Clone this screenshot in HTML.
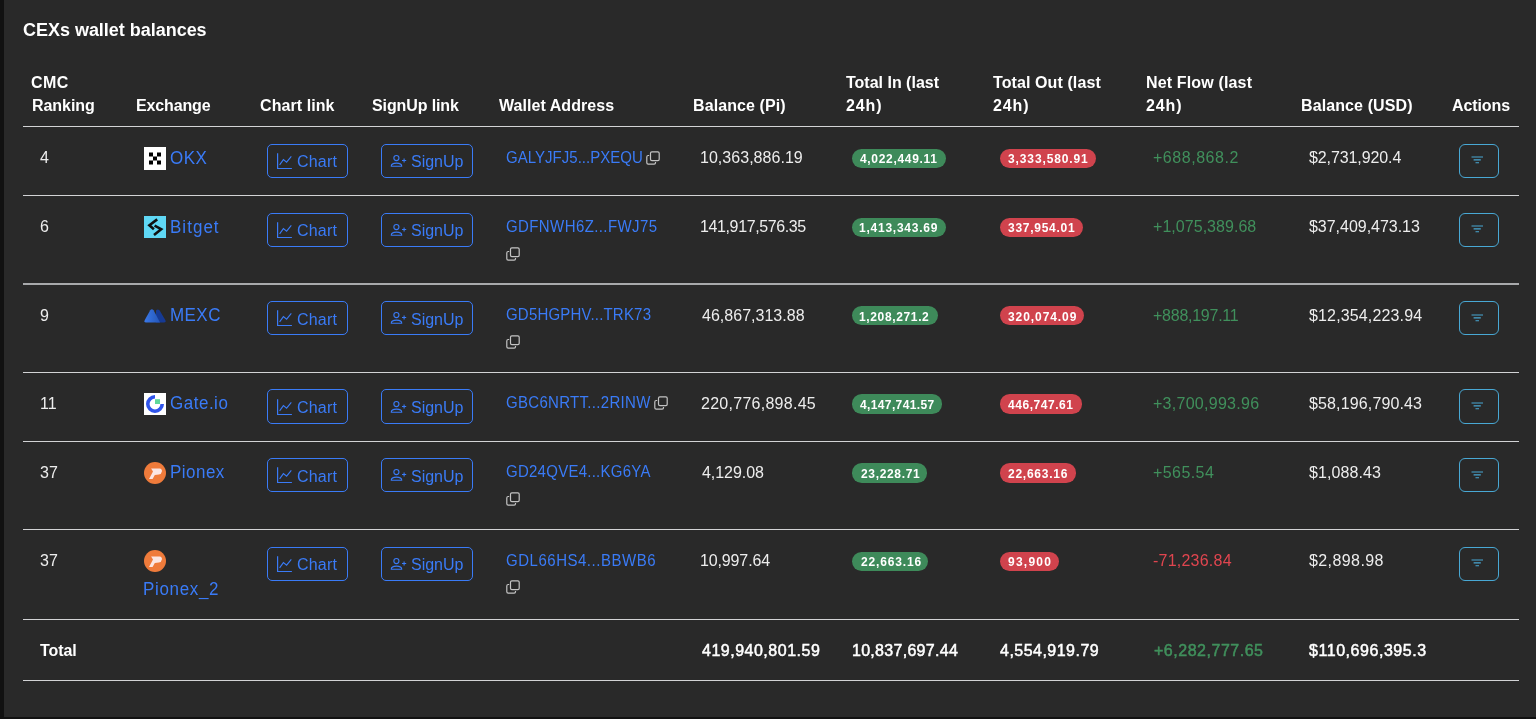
<!DOCTYPE html>
<html><head><meta charset="utf-8"><style>
html,body{margin:0;padding:0;}
body{width:1536px;height:719px;background:#292929;position:relative;overflow:hidden;font-family:"Liberation Sans", sans-serif;}
.t{position:absolute;white-space:nowrap;will-change:transform;}
.a{position:absolute;display:block;}
.hl{position:absolute;left:23px;width:1496px;height:1px;background:#d2d3d5;}
.btn{position:absolute;height:34.5px;border:1.7px solid #3a7bf7;border-radius:5px;box-sizing:border-box;}
.ab{border-color:#48a8d4;border-width:1.8px;border-radius:6px;}
.bd{position:absolute;height:19.5px;border-radius:9.75px;}
.ls{position:absolute;left:0;top:0;width:3.5px;height:719px;background:#111111;}
.bs{position:absolute;left:0;top:717.4px;width:1536px;height:1.6px;background:#111111;}
</style></head><body>
<div class="ls"></div><div class="bs"></div>
<div id="title" class="t" style="left:22.80px;top:20.76px;font-size:18px;line-height:18px;font-weight:700;color:#ffffff;letter-spacing:-0.024px;">CEXs wallet balances</div>
<div id="h_cmc" class="t" style="left:31.00px;top:74.86px;font-size:16px;line-height:16px;font-weight:700;color:#ffffff;letter-spacing:0.450px;">CMC</div>
<div id="h_rank" class="t" style="left:31.54px;top:98.06px;font-size:16px;line-height:16px;font-weight:700;color:#ffffff;letter-spacing:-0.056px;">Ranking</div>
<div id="h_ex" class="t" style="left:136.34px;top:98.06px;font-size:16px;line-height:16px;font-weight:700;color:#ffffff;letter-spacing:-0.149px;">Exchange</div>
<div id="h_chart" class="t" style="left:259.80px;top:98.06px;font-size:16px;line-height:16px;font-weight:700;color:#ffffff;letter-spacing:0.071px;">Chart link</div>
<div id="h_sign" class="t" style="left:372.20px;top:98.06px;font-size:16px;line-height:16px;font-weight:700;color:#ffffff;letter-spacing:-0.107px;">SignUp link</div>
<div id="h_addr" class="t" style="left:499.38px;top:98.06px;font-size:16px;line-height:16px;font-weight:700;color:#ffffff;letter-spacing:0.054px;">Wallet Address</div>
<div id="h_bal" class="t" style="left:692.54px;top:98.06px;font-size:16px;line-height:16px;font-weight:700;color:#ffffff;letter-spacing:0.093px;">Balance (Pi)</div>
<div id="h_in1" class="t" style="left:846.09px;top:74.86px;font-size:16px;line-height:16px;font-weight:700;color:#ffffff;letter-spacing:-0.002px;">Total In (last</div>
<div id="h_in2" class="t" style="left:845.70px;top:98.06px;font-size:16px;line-height:16px;font-weight:700;color:#ffffff;letter-spacing:0.882px;">24h)</div>
<div id="h_out1" class="t" style="left:993.29px;top:74.86px;font-size:16px;line-height:16px;font-weight:700;color:#ffffff;letter-spacing:0.097px;">Total Out (last</div>
<div id="h_out2" class="t" style="left:992.90px;top:98.06px;font-size:16px;line-height:16px;font-weight:700;color:#ffffff;letter-spacing:0.876px;">24h)</div>
<div id="h_net1" class="t" style="left:1145.74px;top:74.86px;font-size:16px;line-height:16px;font-weight:700;color:#ffffff;letter-spacing:0.153px;">Net Flow (last</div>
<div id="h_net2" class="t" style="left:1145.70px;top:98.06px;font-size:16px;line-height:16px;font-weight:700;color:#ffffff;letter-spacing:0.904px;">24h)</div>
<div id="h_usd" class="t" style="left:1300.54px;top:98.06px;font-size:16px;line-height:16px;font-weight:700;color:#ffffff;letter-spacing:0.108px;">Balance (USD)</div>
<div id="h_act" class="t" style="left:1452.00px;top:98.06px;font-size:16px;line-height:16px;font-weight:700;color:#ffffff;letter-spacing:-0.090px;">Actions</div>
<div class="hl" style="top:126px"></div>
<div class="hl" style="top:195px"></div>
<div class="hl" style="top:372px"></div>
<div class="hl" style="top:441px"></div>
<div class="hl" style="top:529px"></div>
<div class="hl" style="top:619px"></div>
<div class="hl" style="top:680px"></div>
<div class="hl" style="top:283px;height:2px;background:#a8a9ab"></div>
<div id="r0_rank" class="t" style="left:40.00px;top:150.46px;font-size:16px;line-height:16px;font-weight:400;color:#ededed;letter-spacing:0.000px;">4</div>
<svg class="a" style="left:144px;top:146.7px" width="22" height="23" viewBox="0 0 22 23"><rect width="22" height="23" fill="#fff"/><g fill="#000"><rect x="5" y="5.5" width="4" height="4"/><rect x="13" y="5.5" width="4" height="4"/><rect x="9" y="9.5" width="4" height="4"/><rect x="5" y="13.5" width="4" height="4"/><rect x="13" y="13.5" width="4" height="4"/></g></svg>
<div id="r0_ex" class="t" style="left:170.20px;top:149.61px;font-size:17px;line-height:17px;font-weight:400;color:#3a7bf7;letter-spacing:0.469px;transform:scaleY(1.09);transform-origin:0 14.39px;">OKX</div>
<div class="btn" style="left:267px;top:143.5px;width:81px"></div>
<svg class="a" style="left:277.1px;top:153.0px" width="17" height="17" viewBox="0 0 17 17"><path d="M0.6 0.3 V15.5 H14.9" fill="none" stroke="#3a7bf7" stroke-width="1.2"/><path d="M2.6 11.9 L6.4 6.6 L9.6 9.2 L14.3 3.3" fill="none" stroke="#3a7bf7" stroke-width="1.1"/></svg>
<div id="r0_chart" class="t" style="left:297.40px;top:154.46px;font-size:16px;line-height:16px;font-weight:400;color:#3a7bf7;letter-spacing:0.187px;">Chart</div>
<div class="btn" style="left:381px;top:143.5px;width:92px"></div>
<svg class="a" style="left:390px;top:155.0px" width="18" height="14" viewBox="0 0 18 14"><circle cx="6.4" cy="3.1" r="2.55" fill="none" stroke="#3a7bf7" stroke-width="1.1"/><path d="M1.25 11.2 Q1.25 8.1 6.5 8.1 Q11.75 8.1 11.75 11.2 Z" fill="none" stroke="#3a7bf7" stroke-width="1.1" stroke-linejoin="round"/><path d="M14.1 3.4 V7.6 M12 5.5 H16.2" stroke="#3a7bf7" stroke-width="1.1"/></svg>
<div id="r0_sign" class="t" style="left:410.62px;top:154.46px;font-size:16px;line-height:16px;font-weight:400;color:#3a7bf7;letter-spacing:-0.021px;">SignUp</div>
<div id="r0_addr" class="t" style="left:506.00px;top:149.60px;font-size:15px;line-height:15px;font-weight:400;color:#3a7bf7;letter-spacing:0.027px;transform:scaleY(1.06);transform-origin:0 12.7px;">GALYJFJ5...PXEQU</div>
<svg class="a" style="left:646.2px;top:151.3px" width="14" height="14" viewBox="0 0 14 14"><path d="M3.2 4.5 H2.2 Q0.8 4.5 0.8 5.9 V11.8 Q0.8 13.2 2.2 13.2 H8.1 Q9.5 13.2 9.5 11.8 V10.9" fill="none" stroke="#c4c4c4" stroke-width="1.2"/><rect x="4.5" y="0.8" width="8.7" height="8.9" rx="1.4" fill="none" stroke="#c4c4c4" stroke-width="1.2"/></svg>
<div id="r0_bal" class="t" style="left:700.48px;top:150.46px;font-size:16px;line-height:16px;font-weight:400;color:#ededed;letter-spacing:0.032px;">10,363,886.19</div>
<div class="bd" style="left:852.1px;top:148.60px;width:93.6px;background:#3e8a5a"></div>
<div id="r0_in" class="t" style="left:860.29px;top:153.24px;font-size:12px;line-height:12px;font-weight:700;color:#ffffff;letter-spacing:0.680px;">4,022,449.11</div>
<div class="bd" style="left:999.9px;top:148.60px;width:95.9px;background:#d0434d"></div>
<div id="r0_out" class="t" style="left:1008.17px;top:153.24px;font-size:12px;line-height:12px;font-weight:700;color:#ffffff;letter-spacing:0.882px;">3,333,580.91</div>
<div id="r0_net" class="t" style="left:1153.00px;top:150.46px;font-size:16px;line-height:16px;font-weight:400;color:#40905c;letter-spacing:0.530px;">+688,868.2</div>
<div id="r0_usd" class="t" style="left:1309.26px;top:150.46px;font-size:16px;line-height:16px;font-weight:400;color:#ededed;letter-spacing:-0.096px;">$2,731,920.4</div>
<div class="btn ab" style="left:1459px;top:143.5px;width:40px"></div>
<svg class="a" style="left:1471px;top:156.4px" width="13" height="8" viewBox="0 0 13 8"><path d="M0.5 1 H12 M2.6 3.9 H9.8 M4.5 6.8 H8" stroke="#48a8d4" stroke-width="1.1"/></svg>
<div id="r1_rank" class="t" style="left:40.00px;top:219.46px;font-size:16px;line-height:16px;font-weight:400;color:#ededed;letter-spacing:0.000px;">6</div>
<svg class="a" style="left:144px;top:216.4px" width="22" height="22" viewBox="0 0 22 22"><rect width="22" height="22" fill="#5fd8f5"/><path d="M13.2 3.4 L5.4 9.3 L9.9 13.2" fill="none" stroke="#111" stroke-width="2.6" stroke-linejoin="miter"/><path d="M10.6 9.6 L17.2 13.2 L10 19" fill="none" stroke="#111" stroke-width="2.6" stroke-linejoin="miter"/></svg>
<div id="r1_ex" class="t" style="left:169.58px;top:218.61px;font-size:17px;line-height:17px;font-weight:400;color:#3a7bf7;letter-spacing:1.023px;transform:scaleY(1.09);transform-origin:0 14.39px;">Bitget</div>
<div class="btn" style="left:267px;top:212.5px;width:81px"></div>
<svg class="a" style="left:277.1px;top:222.0px" width="17" height="17" viewBox="0 0 17 17"><path d="M0.6 0.3 V15.5 H14.9" fill="none" stroke="#3a7bf7" stroke-width="1.2"/><path d="M2.6 11.9 L6.4 6.6 L9.6 9.2 L14.3 3.3" fill="none" stroke="#3a7bf7" stroke-width="1.1"/></svg>
<div id="r1_chart" class="t" style="left:297.40px;top:223.46px;font-size:16px;line-height:16px;font-weight:400;color:#3a7bf7;letter-spacing:0.187px;">Chart</div>
<div class="btn" style="left:381px;top:212.5px;width:92px"></div>
<svg class="a" style="left:390px;top:224.0px" width="18" height="14" viewBox="0 0 18 14"><circle cx="6.4" cy="3.1" r="2.55" fill="none" stroke="#3a7bf7" stroke-width="1.1"/><path d="M1.25 11.2 Q1.25 8.1 6.5 8.1 Q11.75 8.1 11.75 11.2 Z" fill="none" stroke="#3a7bf7" stroke-width="1.1" stroke-linejoin="round"/><path d="M14.1 3.4 V7.6 M12 5.5 H16.2" stroke="#3a7bf7" stroke-width="1.1"/></svg>
<div id="r1_sign" class="t" style="left:410.62px;top:223.46px;font-size:16px;line-height:16px;font-weight:400;color:#3a7bf7;letter-spacing:-0.021px;">SignUp</div>
<div id="r1_addr" class="t" style="left:506.00px;top:218.60px;font-size:15px;line-height:15px;font-weight:400;color:#3a7bf7;letter-spacing:0.400px;transform:scaleY(1.06);transform-origin:0 12.7px;">GDFNWH6Z...FWJ75</div>
<svg class="a" style="left:505.8px;top:246.6px" width="14" height="14" viewBox="0 0 14 14"><path d="M3.2 4.5 H2.2 Q0.8 4.5 0.8 5.9 V11.8 Q0.8 13.2 2.2 13.2 H8.1 Q9.5 13.2 9.5 11.8 V10.9" fill="none" stroke="#c4c4c4" stroke-width="1.2"/><rect x="4.5" y="0.8" width="8.7" height="8.9" rx="1.4" fill="none" stroke="#c4c4c4" stroke-width="1.2"/></svg>
<div id="r1_bal" class="t" style="left:700.48px;top:219.46px;font-size:16px;line-height:16px;font-weight:400;color:#ededed;letter-spacing:-0.381px;">141,917,576.35</div>
<div class="bd" style="left:852.1px;top:217.60px;width:94.3px;background:#3e8a5a"></div>
<div id="r1_in" class="t" style="left:859.40px;top:222.24px;font-size:12px;line-height:12px;font-weight:700;color:#ffffff;letter-spacing:0.757px;">1,413,343.69</div>
<div class="bd" style="left:999.9px;top:217.60px;width:82.9px;background:#d0434d"></div>
<div id="r1_out" class="t" style="left:1008.17px;top:222.24px;font-size:12px;line-height:12px;font-weight:700;color:#ffffff;letter-spacing:0.722px;">337,954.01</div>
<div id="r1_net" class="t" style="left:1153.00px;top:219.46px;font-size:16px;line-height:16px;font-weight:400;color:#40905c;letter-spacing:0.042px;">+1,075,389.68</div>
<div id="r1_usd" class="t" style="left:1309.26px;top:219.46px;font-size:16px;line-height:16px;font-weight:400;color:#ededed;letter-spacing:-0.027px;">$37,409,473.13</div>
<div class="btn ab" style="left:1459px;top:212.5px;width:40px"></div>
<svg class="a" style="left:1471px;top:225.4px" width="13" height="8" viewBox="0 0 13 8"><path d="M0.5 1 H12 M2.6 3.9 H9.8 M4.5 6.8 H8" stroke="#48a8d4" stroke-width="1.1"/></svg>
<div id="r2_rank" class="t" style="left:40.00px;top:307.76px;font-size:16px;line-height:16px;font-weight:400;color:#ededed;letter-spacing:0.000px;">9</div>
<svg class="a" style="left:144px;top:308.8px" width="22" height="14" viewBox="0 0 22 14"><defs><linearGradient id="mg" x1="0" y1="0" x2="1" y2="0"><stop offset="0" stop-color="#3a78e8"/><stop offset="1" stop-color="#2456b8"/></linearGradient></defs><path d="M12 1.5 Q13.5 -0.5 15.5 1.2 L21.3 11 Q22.3 13.3 19.8 13.5 L12 13.5 Z" fill="#163a94"/><path d="M6.2 1.3 Q7.8 -0.6 9.6 1.3 L16 13.5 L2.2 13.5 Q-0.3 13.3 0.8 11 Z" fill="url(#mg)"/></svg>
<div id="r2_ex" class="t" style="left:169.58px;top:306.91px;font-size:17px;line-height:17px;font-weight:400;color:#3a7bf7;letter-spacing:0.437px;transform:scaleY(1.09);transform-origin:0 14.39px;">MEXC</div>
<div class="btn" style="left:267px;top:300.8px;width:81px"></div>
<svg class="a" style="left:277.1px;top:310.3px" width="17" height="17" viewBox="0 0 17 17"><path d="M0.6 0.3 V15.5 H14.9" fill="none" stroke="#3a7bf7" stroke-width="1.2"/><path d="M2.6 11.9 L6.4 6.6 L9.6 9.2 L14.3 3.3" fill="none" stroke="#3a7bf7" stroke-width="1.1"/></svg>
<div id="r2_chart" class="t" style="left:297.40px;top:311.76px;font-size:16px;line-height:16px;font-weight:400;color:#3a7bf7;letter-spacing:0.187px;">Chart</div>
<div class="btn" style="left:381px;top:300.8px;width:92px"></div>
<svg class="a" style="left:390px;top:312.3px" width="18" height="14" viewBox="0 0 18 14"><circle cx="6.4" cy="3.1" r="2.55" fill="none" stroke="#3a7bf7" stroke-width="1.1"/><path d="M1.25 11.2 Q1.25 8.1 6.5 8.1 Q11.75 8.1 11.75 11.2 Z" fill="none" stroke="#3a7bf7" stroke-width="1.1" stroke-linejoin="round"/><path d="M14.1 3.4 V7.6 M12 5.5 H16.2" stroke="#3a7bf7" stroke-width="1.1"/></svg>
<div id="r2_sign" class="t" style="left:410.62px;top:311.76px;font-size:16px;line-height:16px;font-weight:400;color:#3a7bf7;letter-spacing:-0.021px;">SignUp</div>
<div id="r2_addr" class="t" style="left:506.00px;top:306.90px;font-size:15px;line-height:15px;font-weight:400;color:#3a7bf7;letter-spacing:0.200px;transform:scaleY(1.06);transform-origin:0 12.7px;">GD5HGPHV...TRK73</div>
<svg class="a" style="left:505.9px;top:334.9px" width="14" height="14" viewBox="0 0 14 14"><path d="M3.2 4.5 H2.2 Q0.8 4.5 0.8 5.9 V11.8 Q0.8 13.2 2.2 13.2 H8.1 Q9.5 13.2 9.5 11.8 V10.9" fill="none" stroke="#c4c4c4" stroke-width="1.2"/><rect x="4.5" y="0.8" width="8.7" height="8.9" rx="1.4" fill="none" stroke="#c4c4c4" stroke-width="1.2"/></svg>
<div id="r2_bal" class="t" style="left:701.51px;top:307.76px;font-size:16px;line-height:16px;font-weight:400;color:#ededed;letter-spacing:0.020px;">46,867,313.88</div>
<div class="bd" style="left:852.1px;top:305.90px;width:85.6px;background:#3e8a5a"></div>
<div id="r2_in" class="t" style="left:859.40px;top:310.54px;font-size:12px;line-height:12px;font-weight:700;color:#ffffff;letter-spacing:0.638px;">1,208,271.2</div>
<div class="bd" style="left:999.9px;top:305.90px;width:84.6px;background:#d0434d"></div>
<div id="r2_out" class="t" style="left:1008.17px;top:310.54px;font-size:12px;line-height:12px;font-weight:700;color:#ffffff;letter-spacing:0.925px;">320,074.09</div>
<div id="r2_net" class="t" style="left:1153.00px;top:307.76px;font-size:16px;line-height:16px;font-weight:400;color:#40905c;letter-spacing:-0.253px;">+888,197.11</div>
<div id="r2_usd" class="t" style="left:1309.26px;top:307.76px;font-size:16px;line-height:16px;font-weight:400;color:#ededed;letter-spacing:0.144px;">$12,354,223.94</div>
<div class="btn ab" style="left:1459px;top:300.8px;width:40px"></div>
<svg class="a" style="left:1471px;top:313.7px" width="13" height="8" viewBox="0 0 13 8"><path d="M0.5 1 H12 M2.6 3.9 H9.8 M4.5 6.8 H8" stroke="#48a8d4" stroke-width="1.1"/></svg>
<div id="r3_rank" class="t" style="left:40.00px;top:396.16px;font-size:16px;line-height:16px;font-weight:400;color:#ededed;letter-spacing:0.000px;">11</div>
<svg class="a" style="left:144px;top:393.09999999999997px" width="22" height="22" viewBox="0 0 22 22"><rect width="22" height="22" fill="#fff"/><path d="M11 2 A9 9 0 1 0 20 11 L16.4 11 A5.4 5.4 0 1 1 11 5.6 Z" fill="#2f54eb"/><rect x="11" y="6.2" width="5" height="4.8" fill="#5fd89a"/></svg>
<div id="r3_ex" class="t" style="left:170.20px;top:395.31px;font-size:17px;line-height:17px;font-weight:400;color:#3a7bf7;letter-spacing:0.508px;transform:scaleY(1.09);transform-origin:0 14.39px;">Gate.io</div>
<div class="btn" style="left:267px;top:389.2px;width:81px"></div>
<svg class="a" style="left:277.1px;top:398.7px" width="17" height="17" viewBox="0 0 17 17"><path d="M0.6 0.3 V15.5 H14.9" fill="none" stroke="#3a7bf7" stroke-width="1.2"/><path d="M2.6 11.9 L6.4 6.6 L9.6 9.2 L14.3 3.3" fill="none" stroke="#3a7bf7" stroke-width="1.1"/></svg>
<div id="r3_chart" class="t" style="left:297.40px;top:400.16px;font-size:16px;line-height:16px;font-weight:400;color:#3a7bf7;letter-spacing:0.187px;">Chart</div>
<div class="btn" style="left:381px;top:389.2px;width:92px"></div>
<svg class="a" style="left:390px;top:400.7px" width="18" height="14" viewBox="0 0 18 14"><circle cx="6.4" cy="3.1" r="2.55" fill="none" stroke="#3a7bf7" stroke-width="1.1"/><path d="M1.25 11.2 Q1.25 8.1 6.5 8.1 Q11.75 8.1 11.75 11.2 Z" fill="none" stroke="#3a7bf7" stroke-width="1.1" stroke-linejoin="round"/><path d="M14.1 3.4 V7.6 M12 5.5 H16.2" stroke="#3a7bf7" stroke-width="1.1"/></svg>
<div id="r3_sign" class="t" style="left:410.62px;top:400.16px;font-size:16px;line-height:16px;font-weight:400;color:#3a7bf7;letter-spacing:-0.021px;">SignUp</div>
<div id="r3_addr" class="t" style="left:506.00px;top:395.30px;font-size:15px;line-height:15px;font-weight:400;color:#3a7bf7;letter-spacing:0.306px;transform:scaleY(1.06);transform-origin:0 12.7px;">GBC6NRTT...2RINW</div>
<svg class="a" style="left:654.1px;top:396.1px" width="14" height="14" viewBox="0 0 14 14"><path d="M3.2 4.5 H2.2 Q0.8 4.5 0.8 5.9 V11.8 Q0.8 13.2 2.2 13.2 H8.1 Q9.5 13.2 9.5 11.8 V10.9" fill="none" stroke="#c4c4c4" stroke-width="1.2"/><rect x="4.5" y="0.8" width="8.7" height="8.9" rx="1.4" fill="none" stroke="#c4c4c4" stroke-width="1.2"/></svg>
<div id="r3_bal" class="t" style="left:700.80px;top:396.16px;font-size:16px;line-height:16px;font-weight:400;color:#ededed;letter-spacing:0.271px;">220,776,898.45</div>
<div class="bd" style="left:852.1px;top:394.30px;width:90.4px;background:#3e8a5a"></div>
<div id="r3_in" class="t" style="left:860.29px;top:398.94px;font-size:12px;line-height:12px;font-weight:700;color:#ffffff;letter-spacing:0.370px;">4,147,741.57</div>
<div class="bd" style="left:999.9px;top:394.30px;width:81.7px;background:#d0434d"></div>
<div id="r3_out" class="t" style="left:1007.89px;top:398.94px;font-size:12px;line-height:12px;font-weight:700;color:#ffffff;letter-spacing:0.547px;">446,747.61</div>
<div id="r3_net" class="t" style="left:1153.00px;top:396.16px;font-size:16px;line-height:16px;font-weight:400;color:#40905c;letter-spacing:0.273px;">+3,700,993.96</div>
<div id="r3_usd" class="t" style="left:1309.26px;top:396.16px;font-size:16px;line-height:16px;font-weight:400;color:#ededed;letter-spacing:0.138px;">$58,196,790.43</div>
<div class="btn ab" style="left:1459px;top:389.2px;width:40px"></div>
<svg class="a" style="left:1471px;top:402.09999999999997px" width="13" height="8" viewBox="0 0 13 8"><path d="M0.5 1 H12 M2.6 3.9 H9.8 M4.5 6.8 H8" stroke="#48a8d4" stroke-width="1.1"/></svg>
<div id="r4_rank" class="t" style="left:40.00px;top:464.86px;font-size:16px;line-height:16px;font-weight:400;color:#ededed;letter-spacing:0.000px;">37</div>
<svg class="a" style="left:144px;top:461.79999999999995px" width="22" height="22" viewBox="0 0 22 22"><circle cx="11" cy="11" r="11" fill="#ef7b3b"/><path d="M7.1 6.5 L15.6 6.5 Q18.3 7 17.9 9.4 Q17.3 12.3 14.8 12.6 L10.8 12.9 L8.6 17.1 L5 17.1 L9 9.4 Z" fill="#fbe6e3"/></svg>
<div id="r4_ex" class="t" style="left:169.58px;top:464.01px;font-size:17px;line-height:17px;font-weight:400;color:#3a7bf7;letter-spacing:0.467px;transform:scaleY(1.09);transform-origin:0 14.39px;">Pionex</div>
<div class="btn" style="left:267px;top:457.9px;width:81px"></div>
<svg class="a" style="left:277.1px;top:467.4px" width="17" height="17" viewBox="0 0 17 17"><path d="M0.6 0.3 V15.5 H14.9" fill="none" stroke="#3a7bf7" stroke-width="1.2"/><path d="M2.6 11.9 L6.4 6.6 L9.6 9.2 L14.3 3.3" fill="none" stroke="#3a7bf7" stroke-width="1.1"/></svg>
<div id="r4_chart" class="t" style="left:297.40px;top:468.86px;font-size:16px;line-height:16px;font-weight:400;color:#3a7bf7;letter-spacing:0.187px;">Chart</div>
<div class="btn" style="left:381px;top:457.9px;width:92px"></div>
<svg class="a" style="left:390px;top:469.4px" width="18" height="14" viewBox="0 0 18 14"><circle cx="6.4" cy="3.1" r="2.55" fill="none" stroke="#3a7bf7" stroke-width="1.1"/><path d="M1.25 11.2 Q1.25 8.1 6.5 8.1 Q11.75 8.1 11.75 11.2 Z" fill="none" stroke="#3a7bf7" stroke-width="1.1" stroke-linejoin="round"/><path d="M14.1 3.4 V7.6 M12 5.5 H16.2" stroke="#3a7bf7" stroke-width="1.1"/></svg>
<div id="r4_sign" class="t" style="left:410.62px;top:468.86px;font-size:16px;line-height:16px;font-weight:400;color:#3a7bf7;letter-spacing:-0.021px;">SignUp</div>
<div id="r4_addr" class="t" style="left:506.00px;top:464.00px;font-size:15px;line-height:15px;font-weight:400;color:#3a7bf7;letter-spacing:0.256px;transform:scaleY(1.06);transform-origin:0 12.7px;">GD24QVE4...KG6YA</div>
<svg class="a" style="left:505.9px;top:492px" width="14" height="14" viewBox="0 0 14 14"><path d="M3.2 4.5 H2.2 Q0.8 4.5 0.8 5.9 V11.8 Q0.8 13.2 2.2 13.2 H8.1 Q9.5 13.2 9.5 11.8 V10.9" fill="none" stroke="#c4c4c4" stroke-width="1.2"/><rect x="4.5" y="0.8" width="8.7" height="8.9" rx="1.4" fill="none" stroke="#c4c4c4" stroke-width="1.2"/></svg>
<div id="r4_bal" class="t" style="left:701.51px;top:464.86px;font-size:16px;line-height:16px;font-weight:400;color:#ededed;letter-spacing:-0.052px;">4,129.08</div>
<div class="bd" style="left:852.1px;top:463.00px;width:75.0px;background:#3e8a5a"></div>
<div id="r4_in" class="t" style="left:860.82px;top:467.64px;font-size:12px;line-height:12px;font-weight:700;color:#ffffff;letter-spacing:0.663px;">23,228.71</div>
<div class="bd" style="left:999.9px;top:463.00px;width:75.7px;background:#d0434d"></div>
<div id="r4_out" class="t" style="left:1008.42px;top:467.64px;font-size:12px;line-height:12px;font-weight:700;color:#ffffff;letter-spacing:0.746px;">22,663.16</div>
<div id="r4_net" class="t" style="left:1153.00px;top:464.86px;font-size:16px;line-height:16px;font-weight:400;color:#40905c;letter-spacing:0.428px;">+565.54</div>
<div id="r4_usd" class="t" style="left:1309.26px;top:464.86px;font-size:16px;line-height:16px;font-weight:400;color:#ededed;letter-spacing:0.100px;">$1,088.43</div>
<div class="btn ab" style="left:1459px;top:457.9px;width:40px"></div>
<svg class="a" style="left:1471px;top:470.79999999999995px" width="13" height="8" viewBox="0 0 13 8"><path d="M0.5 1 H12 M2.6 3.9 H9.8 M4.5 6.8 H8" stroke="#48a8d4" stroke-width="1.1"/></svg>
<div id="r5_rank" class="t" style="left:40.00px;top:553.46px;font-size:16px;line-height:16px;font-weight:400;color:#ededed;letter-spacing:0.000px;">37</div>
<svg class="a" style="left:144px;top:550.4px" width="22" height="22" viewBox="0 0 22 22"><circle cx="11" cy="11" r="11" fill="#ef7b3b"/><path d="M7.1 6.5 L15.6 6.5 Q18.3 7 17.9 9.4 Q17.3 12.3 14.8 12.6 L10.8 12.9 L8.6 17.1 L5 17.1 L9 9.4 Z" fill="#fbe6e3"/></svg>
<div id="r5_ex" class="t" style="left:143.38px;top:581.21px;font-size:17px;line-height:17px;font-weight:400;color:#3a7bf7;letter-spacing:0.659px;transform:scaleY(1.09);transform-origin:0 14.39px;">Pionex_2</div>
<div class="btn" style="left:267px;top:546.5px;width:81px"></div>
<svg class="a" style="left:277.1px;top:556.0px" width="17" height="17" viewBox="0 0 17 17"><path d="M0.6 0.3 V15.5 H14.9" fill="none" stroke="#3a7bf7" stroke-width="1.2"/><path d="M2.6 11.9 L6.4 6.6 L9.6 9.2 L14.3 3.3" fill="none" stroke="#3a7bf7" stroke-width="1.1"/></svg>
<div id="r5_chart" class="t" style="left:297.40px;top:557.46px;font-size:16px;line-height:16px;font-weight:400;color:#3a7bf7;letter-spacing:0.187px;">Chart</div>
<div class="btn" style="left:381px;top:546.5px;width:92px"></div>
<svg class="a" style="left:390px;top:558.0px" width="18" height="14" viewBox="0 0 18 14"><circle cx="6.4" cy="3.1" r="2.55" fill="none" stroke="#3a7bf7" stroke-width="1.1"/><path d="M1.25 11.2 Q1.25 8.1 6.5 8.1 Q11.75 8.1 11.75 11.2 Z" fill="none" stroke="#3a7bf7" stroke-width="1.1" stroke-linejoin="round"/><path d="M14.1 3.4 V7.6 M12 5.5 H16.2" stroke="#3a7bf7" stroke-width="1.1"/></svg>
<div id="r5_sign" class="t" style="left:410.62px;top:557.46px;font-size:16px;line-height:16px;font-weight:400;color:#3a7bf7;letter-spacing:-0.021px;">SignUp</div>
<div id="r5_addr" class="t" style="left:506.00px;top:552.60px;font-size:15px;line-height:15px;font-weight:400;color:#3a7bf7;letter-spacing:0.520px;transform:scaleY(1.06);transform-origin:0 12.7px;">GDL66HS4...BBWB6</div>
<svg class="a" style="left:505.9px;top:580.4px" width="14" height="14" viewBox="0 0 14 14"><path d="M3.2 4.5 H2.2 Q0.8 4.5 0.8 5.9 V11.8 Q0.8 13.2 2.2 13.2 H8.1 Q9.5 13.2 9.5 11.8 V10.9" fill="none" stroke="#c4c4c4" stroke-width="1.2"/><rect x="4.5" y="0.8" width="8.7" height="8.9" rx="1.4" fill="none" stroke="#c4c4c4" stroke-width="1.2"/></svg>
<div id="r5_bal" class="t" style="left:700.48px;top:553.46px;font-size:16px;line-height:16px;font-weight:400;color:#ededed;letter-spacing:-0.135px;">10,997.64</div>
<div class="bd" style="left:852.1px;top:551.60px;width:76.2px;background:#3e8a5a"></div>
<div id="r5_in" class="t" style="left:860.82px;top:556.24px;font-size:12px;line-height:12px;font-weight:700;color:#ffffff;letter-spacing:0.842px;">22,663.16</div>
<div class="bd" style="left:999.9px;top:551.60px;width:59.1px;background:#d0434d"></div>
<div id="r5_out" class="t" style="left:1008.15px;top:556.24px;font-size:12px;line-height:12px;font-weight:700;color:#ffffff;letter-spacing:1.252px;">93,900</div>
<div id="r5_net" class="t" style="left:1153.00px;top:553.46px;font-size:16px;line-height:16px;font-weight:400;color:#e0454f;letter-spacing:0.229px;">-71,236.84</div>
<div id="r5_usd" class="t" style="left:1309.26px;top:553.46px;font-size:16px;line-height:16px;font-weight:400;color:#ededed;letter-spacing:0.411px;">$2,898.98</div>
<div class="btn ab" style="left:1459px;top:546.5px;width:40px"></div>
<svg class="a" style="left:1471px;top:559.4px" width="13" height="8" viewBox="0 0 13 8"><path d="M0.5 1 H12 M2.6 3.9 H9.8 M4.5 6.8 H8" stroke="#48a8d4" stroke-width="1.1"/></svg>
<div id="t_total" class="t" style="left:39.69px;top:643.46px;font-size:16px;line-height:16px;font-weight:700;color:#ffffff;letter-spacing:-0.086px;">Total</div>
<div id="t_bal" class="t" style="left:701.65px;top:643.46px;font-size:16px;line-height:16px;font-weight:400;color:#ffffff;letter-spacing:0.505px;-webkit-text-stroke:0.5px currentColor;">419,940,801.59</div>
<div id="t_in" class="t" style="left:851.89px;top:643.46px;font-size:16px;line-height:16px;font-weight:400;color:#ffffff;letter-spacing:0.289px;-webkit-text-stroke:0.5px currentColor;">10,837,697.44</div>
<div id="t_out" class="t" style="left:1000.25px;top:643.46px;font-size:16px;line-height:16px;font-weight:400;color:#ffffff;letter-spacing:0.479px;-webkit-text-stroke:0.5px currentColor;">4,554,919.79</div>
<div id="t_net" class="t" style="left:1153.92px;top:643.46px;font-size:16px;line-height:16px;font-weight:400;color:#40905c;letter-spacing:0.520px;-webkit-text-stroke:0.5px currentColor;">+6,282,777.65</div>
<div id="t_usd" class="t" style="left:1309.37px;top:643.46px;font-size:16px;line-height:16px;font-weight:400;color:#ffffff;letter-spacing:0.544px;-webkit-text-stroke:0.5px currentColor;">$110,696,395.3</div>
</body></html>
